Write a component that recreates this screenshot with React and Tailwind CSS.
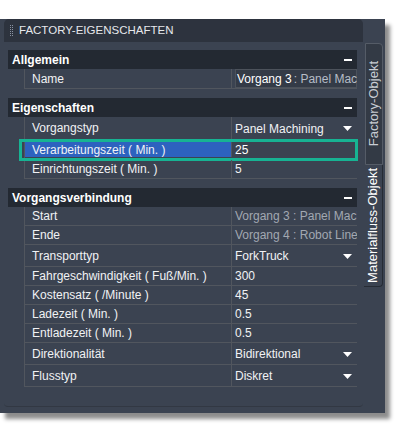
const Arrow = () => (
  <svg width="9" height="5" viewBox="0 0 9 5" className="mr-[5px] shrink-0">
    <path d="M0 0 H9 L4.5 5 Z" fill="#ffffff" />
  </svg>
);

const Grip = () => (
  <svg width="4" height="12" viewBox="0 0 4 12" className="shrink-0">
    {[0, 2, 4, 6, 8, 10].map((y) => (
      <g key={y}>
        <rect x="0" y={y} width="1" height="1" fill="#8a93a2" />
        <rect x="2" y={y} width="1" height="1" fill="#8a93a2" />
      </g>
    ))}
  </svg>
);

const SectionHeader = ({ title }) => (
  <div className="flex h-[19px] items-center justify-between bg-[#232932] pl-[4px] pr-[5px]">
    <span className="font-bold text-white">{title}</span>
    <div className="h-[2px] w-[8px] bg-white" />
  </div>
);

const Row = ({ label, h = "h-[19px]", children, highlight }) => (
  <div className={`relative flex ${h} border-b border-[#51565e]`}>
    <div
      className={`flex w-[207px] shrink-0 items-center overflow-hidden whitespace-nowrap border-r border-[#51565e] pl-[7px] ${
        highlight ? "my-[2px] bg-[#2d62bf]" : ""
      }`}
    >
      {label}
    </div>
    <div className="flex min-w-0 flex-1 items-center overflow-hidden whitespace-nowrap pl-[3px]">
      {children}
    </div>
    {highlight && (
      <div className="absolute -left-[6px] -right-[1px] -top-[1px] -bottom-[2px] border-[3px] border-[#17b393]" />
    )}
  </div>
);

const Drop = ({ value }) => (
  <div className="flex w-full items-center justify-between pt-[1px]">
    <span>{value}</span>
    <Arrow />
  </div>
);

export default function App() {
  return (
    <div className="h-[429px] w-[401px] bg-white pt-[19px] font-['Liberation_Sans',Arial,sans-serif] text-[12px] text-[#f1f2f4]">
      <div className="flex h-[394px] w-[385px] bg-[#3b4351] shadow-[5px_6px_4px_rgba(0,0,0,0.45)]">
        <div className="ml-[4px] flex h-[388px] w-[359px] flex-col rounded-t-[5px] rounded-b-[4px] border-b border-[#323843]">
          <div className="flex h-[23px] shrink-0 items-center gap-[5px] rounded-t-[5px] bg-[#2d333e] pl-[6px]">
            <Grip />
            <span className="text-[11.5px] text-[#e6e8ec]">FACTORY-EIGENSCHAFTEN</span>
          </div>

          <div className="ml-[4px] mr-[6px] mt-[8px] flex flex-col">
            <SectionHeader title="Allgemein" />
            <div className="ml-[16px] border-l border-[#51565e]">
              <Row label="Name" h="h-[20px]">
                <div className="flex h-full w-full items-center border border-[#4c525b] bg-[#343b47] pl-[1px]">
                  <span className="text-white">Vorgang 3</span>
                  <span className="ml-[2px] text-[#b6bdc8]">: Panel Machining</span>
                </div>
              </Row>
            </div>

            <div className="mt-[9px]">
              <SectionHeader title="Eigenschaften" />
            </div>
            <div className="ml-[16px] border-l border-[#51565e]">
              <Row label="Vorgangstyp" h="h-[23px]">
                <Drop value="Panel Machining" />
              </Row>
              <Row label="Verarbeitungszeit ( Min. )" h="h-[20px]" highlight>
                <span className="text-white">25</span>
              </Row>
              <Row label="Einrichtungszeit ( Min. )">
                <span>5</span>
              </Row>
            </div>

            <div className="mt-[9px]">
              <SectionHeader title="Vorgangsverbindung" />
            </div>
            <div className="ml-[16px] border-l border-[#51565e]">
              <Row label="Start">
                <span className="text-[#a2a8b2]">Vorgang 3 : Panel Machining</span>
              </Row>
              <Row label="Ende">
                <span className="text-[#a2a8b2]">Vorgang 4 : Robot Line</span>
              </Row>
              <Row label="Transporttyp" h="h-[22px]">
                <Drop value="ForkTruck" />
              </Row>
              <Row label="Fahrgeschwindigkeit ( Fuß/Min. )">
                <span>300</span>
              </Row>
              <Row label="Kostensatz ( /Minute )">
                <span>45</span>
              </Row>
              <Row label="Ladezeit ( Min. )">
                <span>0.5</span>
              </Row>
              <Row label="Entladezeit ( Min. )">
                <span>0.5</span>
              </Row>
              <Row label="Direktionalität" h="h-[22px]">
                <Drop value="Bidirektional" />
              </Row>
              <Row label="Flusstyp" h="h-[22px]">
                <Drop value="Diskret" />
              </Row>
            </div>
          </div>
        </div>

        <div className="flex w-[22px] flex-col pt-[24px]">
          <div className="ml-[2px] flex h-[122px] w-[18px] items-center justify-center rounded-tr-[4px] border border-[#555c67] bg-[#333a45]">
            <span className="rotate-180 whitespace-nowrap text-[13px] text-[#c9cdd4] [writing-mode:vertical-rl]">
              Factory-Objekt
            </span>
          </div>
          <div className="ml-[1px] flex h-[122px] w-[19px] items-center justify-center rounded-br-[4px] border-b border-r border-[#262c35] bg-[#3b4351]">
            <span className="rotate-180 whitespace-nowrap text-[13px] text-white [writing-mode:vertical-rl]">
              Materialfluss-Objekt
            </span>
          </div>
        </div>
      </div>
    </div>
  );
}
